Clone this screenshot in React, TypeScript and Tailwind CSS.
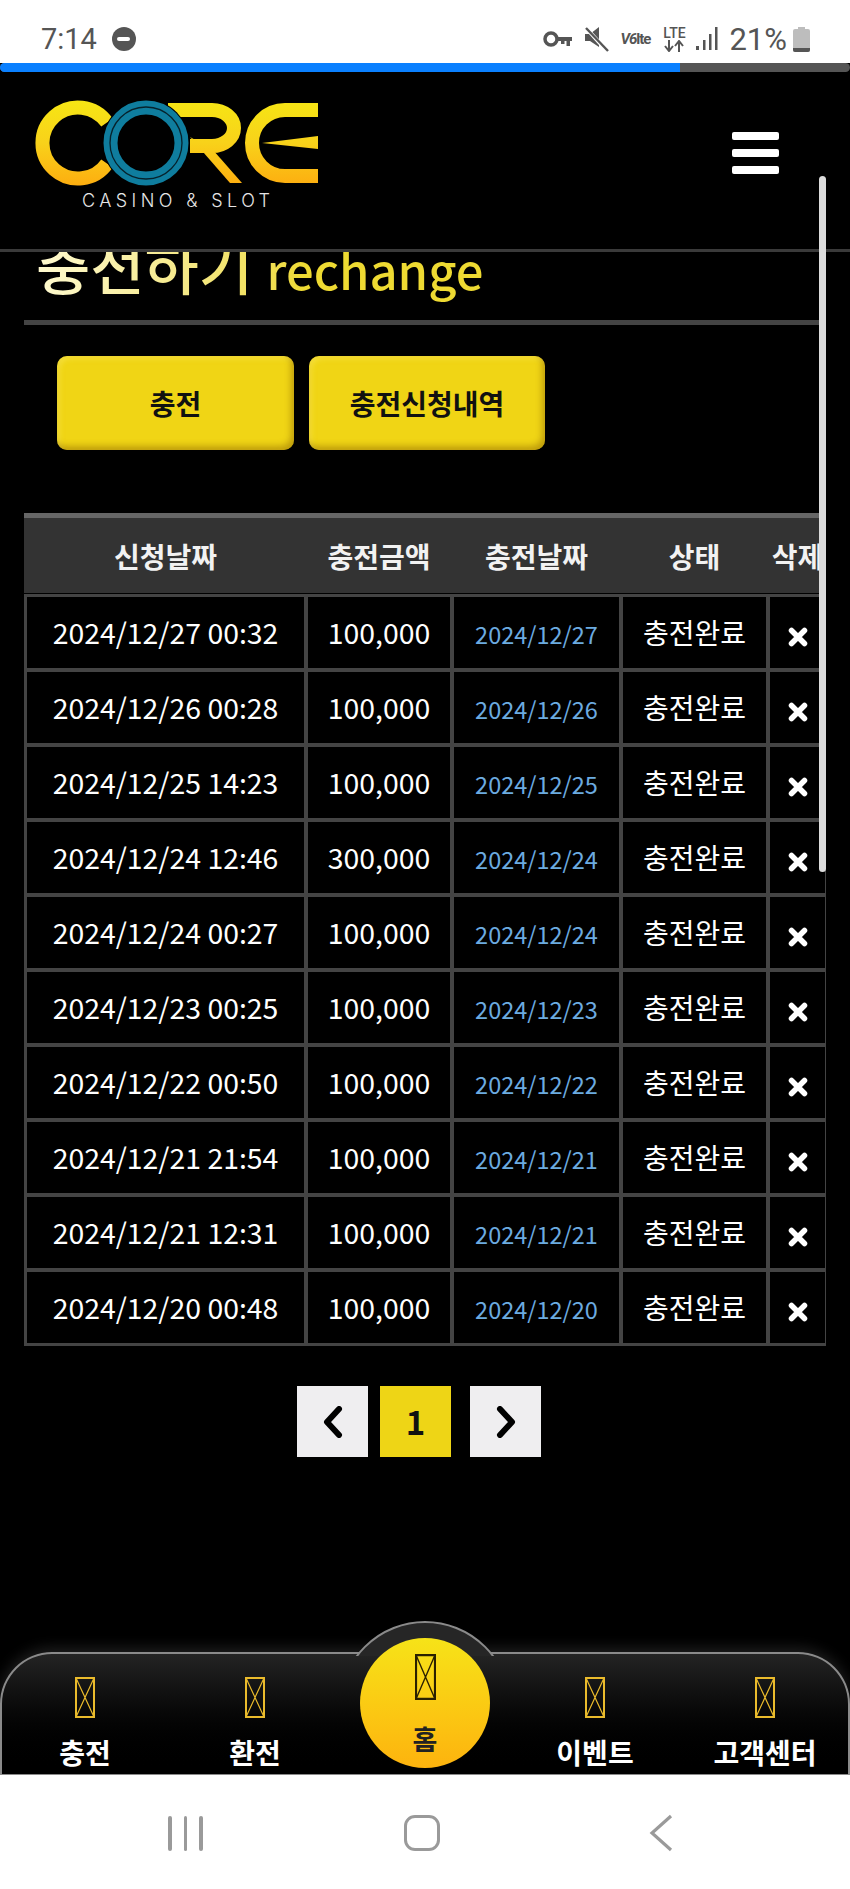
import React from 'react';

const rows = [
  ['2024/12/27 00:32', '100,000', '2024/12/27'],
  ['2024/12/26 00:28', '100,000', '2024/12/26'],
  ['2024/12/25 14:23', '100,000', '2024/12/25'],
  ['2024/12/24 12:46', '300,000', '2024/12/24'],
  ['2024/12/24 00:27', '100,000', '2024/12/24'],
  ['2024/12/23 00:25', '100,000', '2024/12/23'],
  ['2024/12/22 00:50', '100,000', '2024/12/22'],
  ['2024/12/21 21:54', '100,000', '2024/12/21'],
  ['2024/12/21 12:31', '100,000', '2024/12/21'],
  ['2024/12/20 00:48', '100,000', '2024/12/20'],
];

const cols = 'grid grid-cols-[277px_142px_165px_143px_55px] gap-x-[4px]';

function Logo() {
  return (
    <svg width="300" height="95" viewBox="30 95 300 95" className="block">
      <defs>
        <linearGradient id="gold" gradientUnits="userSpaceOnUse" x1="0" y1="100" x2="0" y2="185">
          <stop offset="0" stopColor="#f6e614" />
          <stop offset="0.5" stopColor="#f8d21a" />
          <stop offset="1" stopColor="#fdae10" />
        </linearGradient>
      </defs>
      <path d="M107 122.6 A35.5 35.5 0 1 0 107 163.4" fill="none" stroke="url(#gold)" strokeWidth="14" />
      <path d="M168 110 H212 A22 18 0 0 1 212 146 H190" fill="none" stroke="url(#gold)" strokeWidth="14" />
      <polygon points="190,137 213,150 242,183 230,183" fill="url(#gold)" />
      <path d="M318 110 H285 A33 33 0 0 0 285 176 H318" fill="none" stroke="url(#gold)" strokeWidth="14" />
      <polygon points="262,143 318,136 318,149" fill="url(#gold)" />
      <circle cx="146" cy="143" r="43.5" fill="#000" />
      <circle cx="146" cy="143" r="35.5" fill="none" stroke="#0f7d9e" strokeWidth="14" />
      <circle cx="146" cy="143" r="36" fill="none" stroke="#06222c" strokeWidth="1.3" />
    </svg>
  );
}

function StatusIcons() {
  return (
    <div className="flex items-center text-[#555]">
      <svg width="30" height="18" viewBox="0 0 30 18" className="mr-[11px]">
        <circle cx="8" cy="9" r="6" fill="none" stroke="#555" strokeWidth="3.5" />
        <path d="M14 7 H29 V11 H27 V16 H23.5 V11 H21.5 V14 H18 V11 H14 Z" fill="#555" />
      </svg>
      <svg width="25" height="26" viewBox="0 0 25 26" className="mr-[11px]">
        <path d="M1 8 H6 L15 1 V21 L6 15 H1 Z" fill="#555" />
        <path d="M3 3 L23 25" stroke="#fff" strokeWidth="4" />
        <path d="M2 2 L24 25" stroke="#555" strokeWidth="2.4" />
      </svg>
      <span className="mr-[8px] w-[33px] text-[15px] font-bold italic leading-none tracking-[-1px]">V6<span className="not-italic">lte</span></span>
      <div className="mr-[9px] flex w-[26px] flex-col items-center leading-none">
        <span className="text-[14px] font-medium leading-[14px]">LTE</span>
        <svg width="22" height="12" viewBox="0 0 22 12">
          <path d="M6 0 V10 M2 6 L6 11 L10 6 M16 12 V2 M12 6 L16 1 L20 6" fill="none" stroke="#555" strokeWidth="2" />
        </svg>
      </div>
      <svg width="22" height="24" viewBox="0 0 22 24" className="mr-[11px]">
        <rect x="0" y="19" width="3" height="4" fill="#555" />
        <rect x="7" y="13" width="2.5" height="10" fill="#555" />
        <rect x="13" y="7" width="2.5" height="16" fill="#555" />
        <rect x="19" y="0" width="2.5" height="23" fill="#555" />
      </svg>
      <span className="mr-[6px] text-[31px] leading-none">21%</span>
      <svg width="17" height="25" viewBox="0 0 17 25">
        <path d="M5 0 H12 V2 H15 A2 2 0 0 1 17 4 V23 A2 2 0 0 1 15 25 H2 A2 2 0 0 1 0 23 V4 A2 2 0 0 1 2 2 H5 Z" fill="#bdbdbd" />
        <path d="M0 21 H17 V23 A2 2 0 0 1 15 25 H2 A2 2 0 0 1 0 23 Z" fill="#555" />
      </svg>
    </div>
  );
}

function BrokenImage({ dark }: { dark?: boolean }) {
  const c = dark ? '#2a2000' : '#eabb2c';
  return (
    <svg width={dark ? 21 : 20} height={dark ? 46 : 41} viewBox="0 0 20 41" preserveAspectRatio="none" className="block">
      <rect x="1" y="1" width="18" height="39" fill="none" stroke={c} strokeWidth="2" />
      <path d="M1 1 L19 40 M19 1 L1 40" stroke={c} strokeWidth="1.2" />
    </svg>
  );
}

function NavItem({ label }: { label: string }) {
  return (
    <div className="flex flex-col items-center pt-[23px]">
      <BrokenImage />
      <span className="mt-[16px] whitespace-nowrap text-[28px] font-bold leading-[36px] text-white">{label}</span>
    </div>
  );
}

export default function App() {
  return (
    <div className="relative flex h-[1889px] flex-col overflow-hidden bg-black font-['Noto_Sans_CJK_KR','Noto_Sans',sans-serif]">
      {/* status bar */}
      <div className="flex h-[63px] items-center justify-between bg-white pl-[41px] pr-[40px] pt-[15px] font-['Roboto',sans-serif] text-[#555]">
        <div className="flex items-center gap-[15px]">
          <span className="text-[29px] leading-none">7:14</span>
          <span className="flex h-[24px] w-[24px] items-center justify-center rounded-full bg-[#555]">
            <span className="h-[4px] w-[13px] rounded-full bg-white" />
          </span>
        </div>
        <StatusIcons />
      </div>

      {/* progress */}
      <div className="h-[9px] rounded-full bg-[#555]">
        <div className="h-full w-[680px] rounded-l-full bg-[#0a80ff]" />
      </div>

      {/* header */}
      <div className="flex h-[180px] items-start justify-between border-b-[3px] border-[#3a3a3a] pl-[30px] pr-[71px] pt-[23px]">
        <div className="relative">
          <Logo />
          <span className="absolute left-[52px] top-[97px] whitespace-nowrap font-['Inter',sans-serif] text-[18px] font-light leading-none tracking-[4.4px] text-[#e6e6e6]">CASINO &amp; SLOT</span>
        </div>
        <div className="mt-[37px] flex w-[47px] flex-col gap-[9px]">
          <span className="h-[8px] rounded-[2px] bg-white" />
          <span className="h-[8px] rounded-[2px] bg-white" />
          <span className="h-[8px] rounded-[2px] bg-white" />
        </div>
      </div>

      {/* title, scrolled under the header */}
      <div className="h-[68px] overflow-hidden pl-[36px]">
        <h1 className="mt-[-27px] inline-block bg-gradient-to-r from-[#fffad0] to-[#eeda32] to-60% bg-clip-text text-[59px] font-medium leading-[80px] text-transparent">충전하기 <span className="text-[49px] font-medium">rechange</span></h1>
      </div>

      <div className="ml-[24px] mr-[30px] h-[5px] bg-[#444]" />

      {/* buttons */}
      <div className="ml-[57px] mt-[31px] flex gap-[15px]">
        <button className="h-[94px] w-[237px] rounded-[10px] bg-[#f0d515] text-[28px] font-bold text-[#111] shadow-[inset_-3px_-4px_6px_rgba(130,90,0,0.45),inset_3px_3px_5px_rgba(255,240,120,0.35)]">충전</button>
        <button className="h-[94px] w-[236px] rounded-[10px] bg-[#f0d515] text-[28px] font-bold text-[#111] shadow-[inset_-3px_-4px_6px_rgba(130,90,0,0.45),inset_3px_3px_5px_rgba(255,240,120,0.35)]">충전신청내역</button>
      </div>

      {/* table */}
      <div className="ml-[24px] mt-[63px] w-[802px]">
        <div className={`${cols} h-[80px] items-center border-t-[5px] border-[#666] bg-[#333] pl-[3px] text-center text-[28px] font-bold text-[#f2f2f2]`}>
          <span>신청날짜</span>
          <span>충전금액</span>
          <span>충전날짜</span>
          <span>상태</span>
          <span className="whitespace-nowrap">삭제</span>
        </div>
        <div className="mt-[1px] flex flex-col gap-[4px] border-[3px] border-[#444] bg-[#444]">
          {rows.map((r, i) => (
            <div key={i} className={`${cols} h-[71px] text-center text-white`}>
              <div className="flex items-center justify-center bg-black pb-[1px] text-[28.4px]">{r[0]}</div>
              <div className="flex items-center justify-center bg-black pb-[1px] text-[28.4px]">{r[1]}</div>
              <div className="flex items-center justify-center bg-black pt-[4px] text-[23.5px] text-[#6cabe0]">{r[2]}</div>
              <div className="flex items-center justify-center bg-black pb-[2px] text-[28px]">충전완료</div>
              <div className="flex items-center justify-center bg-black pt-[8px]">
                <svg width="20" height="20" viewBox="0 0 20 20">
                  <path d="M3.5 3.5 L16.5 16.5 M16.5 3.5 L3.5 16.5" stroke="#fff" strokeWidth="5.5" strokeLinecap="round" />
                </svg>
              </div>
            </div>
          ))}
        </div>
      </div>

      {/* pagination */}
      <div className="ml-[297px] mt-[40px] flex">
        <div className="flex h-[71px] w-[71px] items-center justify-center bg-[#efeef0]">
          <svg width="20" height="32" viewBox="0 0 20 32">
            <path d="M16 3 L4 16 L16 29" fill="none" stroke="#000" strokeWidth="6" strokeLinecap="round" strokeLinejoin="round" />
          </svg>
        </div>
        <div className="ml-[12px] flex h-[71px] w-[71px] items-center justify-center bg-[#eed516] text-[33px] font-bold text-[#111]">1</div>
        <div className="ml-[19px] flex h-[71px] w-[71px] items-center justify-center bg-[#efeef0]">
          <svg width="20" height="32" viewBox="0 0 20 32">
            <path d="M4 3 L16 16 L4 29" fill="none" stroke="#000" strokeWidth="6" strokeLinecap="round" strokeLinejoin="round" />
          </svg>
        </div>
      </div>

      <div className="flex-1" />

      {/* bottom nav */}
      <div className="relative h-[123px] rounded-t-[52px] border-x-2 border-t-2 border-b border-[#8a8a8a] bg-gradient-to-b from-[#242424] to-[#000] shadow-[0_-4px_14px_rgba(255,255,255,0.12)]">
        <div className="absolute left-1/2 top-[-33px] h-[35px] w-[172px] -translate-x-1/2 overflow-hidden">
          <div className="h-[172px] w-[172px] rounded-full border-2 border-[#8a8a8a] bg-[#262626]" />
        </div>
        <div className="absolute left-1/2 top-[-16px] flex h-[130px] w-[130px] -translate-x-1/2 flex-col items-center rounded-full bg-gradient-to-b from-[#f6e318] to-[#fdb30e] pt-[16px]">
          <BrokenImage dark />
          <span className="mt-[22px] text-[27px] font-bold leading-[34px] text-[#222]">홈</span>
        </div>
        <div className="mx-[-2px] grid h-full grid-cols-5">
          <NavItem label="충전" />
          <NavItem label="환전" />
          <div />
          <NavItem label="이벤트" />
          <NavItem label="고객센터" />
        </div>
      </div>

      {/* android nav */}
      <div className="flex h-[114px] items-center justify-between bg-white pt-[2px] pl-[168px] pr-[177px]">
        <div className="flex gap-[12px]">
          <span className="h-[35px] w-[3.5px] rounded-full bg-[#9a9a9a]" />
          <span className="h-[35px] w-[3.5px] rounded-full bg-[#9a9a9a]" />
          <span className="h-[35px] w-[3.5px] rounded-full bg-[#9a9a9a]" />
        </div>
        <span className="mr-[7px] h-[36px] w-[36px] rounded-[11px] border-[3.5px] border-[#9a9a9a]" />
        <svg width="24" height="38" viewBox="0 0 24 38">
          <path d="M22 2 L3 19 L22 36" fill="none" stroke="#9a9a9a" strokeWidth="3.2" />
        </svg>
      </div>

      {/* scrollbar overlay */}
      <div className="absolute left-[819px] top-[176px] h-[696px] w-[7px] rounded-full bg-[#dcdcdc]" />
    </div>
  );
}
